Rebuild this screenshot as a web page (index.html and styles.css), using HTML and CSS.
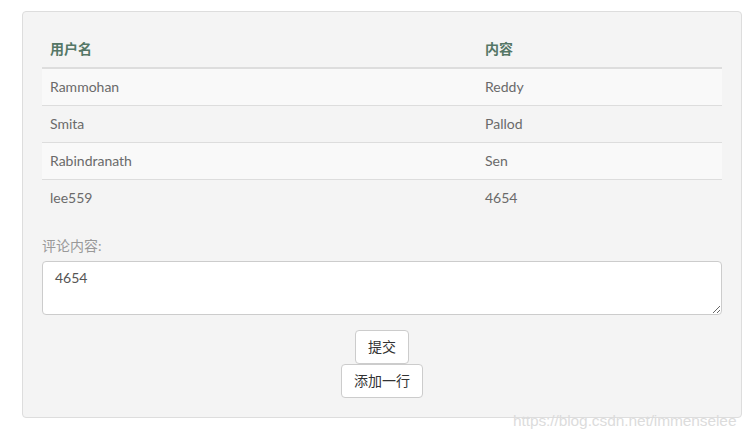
FILE: index.html
```html
<!DOCTYPE html>
<html lang="zh-CN">
<head>
<meta charset="utf-8">
<title>评论</title>
<link rel="stylesheet" href="styles.css">
</head>
<body>
<div class="page">
  <div class="panel">
    <table class="table">
      <thead>
        <tr><th class="col-name">用户名</th><th>内容</th></tr>
      </thead>
      <tbody>
        <tr class="striped"><td>Rammohan</td><td>Reddy</td></tr>
        <tr><td>Smita</td><td>Pallod</td></tr>
        <tr class="striped"><td>Rabindranath</td><td>Sen</td></tr>
        <tr><td>lee559</td><td>4654</td></tr>
      </tbody>
    </table>
    <div class="form-group">
      <label class="label" for="comment">评论内容:</label>
      <textarea id="comment" class="textarea" rows="2">4654</textarea>
    </div>
    <div class="actions">
      <button class="btn" type="button">提交</button>
      <button class="btn" type="button">添加一行</button>
    </div>
  </div>
  <div class="watermark">https://blog.csdn.net/immenselee</div>
</div>
</body>
</html>
```

FILE: styles.css
```css
* { box-sizing: border-box; }
html, body {
  margin: 0;
  padding: 0;
  background: #ffffff;
}
body {
  font-family: "Lato", "Noto Sans CJK SC", sans-serif;
  font-size: 14px;
  line-height: 20px;
  color: #6a6a6a;
}
.page {
  position: relative;
  width: 754px;
  height: 437px;
  padding: 11px 0 0 22px;
}
.panel {
  width: 720px;
  background: #f4f4f4;
  border: 1px solid #dddddd;
  border-radius: 4px;
  padding: 19px 18px 19px 19px;
}
.table {
  width: 680px;
  border-collapse: collapse;
  border-spacing: 0;
  margin-bottom: 20px;
}
.table th,
.table td {
  text-align: left;
  padding: 8px;
  line-height: 20px;
  vertical-align: top;
}
.table th {
  font-weight: bold;
  color: #557766;
  border-bottom: 2px solid #dddddd;
}
.col-name { width: 435px; }
.table td {
  border-top: 1px solid #dddddd;
  color: #6a6a6a;
}
.table tbody tr:first-child td { border-top: 0; }
.striped td { background: #f9f9f9; }
.form-group {
  margin-bottom: 15px;
}
.label {
  display: block;
  margin-bottom: 5px;
  color: #999;
  font-weight: normal;
}
.textarea {
  display: block;
  width: 680px;
  height: 54px;
  padding: 6px 12px;
  border: 1px solid #cccccc;
  border-radius: 4px;
  background: #fff;
  font-family: "Lato", "Noto Sans CJK SC", sans-serif;
  font-size: 14px;
  line-height: 20px;
  color: #555;
  resize: vertical;
}
.actions {
  width: 680px;
  display: flex;
  flex-direction: column;
  align-items: center;
}
.btn {
  display: block;
  padding: 6px 12px;
  font-family: "Lato", "Noto Sans CJK SC", sans-serif;
  font-size: 14px;
  line-height: 20px;
  color: #333;
  background: #fff;
  border: 1px solid #cccccc;
  border-radius: 4px;
  margin: 0;
}
.watermark {
  position: absolute;
  left: 513px;
  top: 411px;
  font-family: "Liberation Sans", Arial, sans-serif;
  font-size: 15.5px;
  line-height: 20px;
  letter-spacing: -0.1px;
  color: #dcdcdc;
  white-space: nowrap;
}
```
